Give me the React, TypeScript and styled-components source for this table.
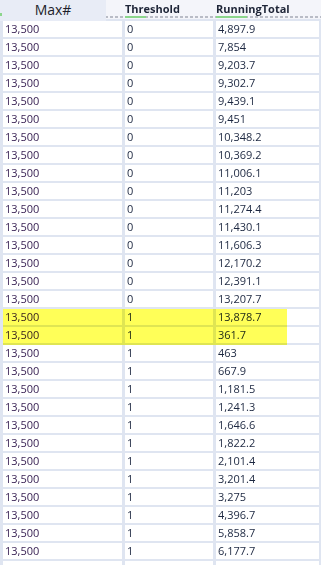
import styled, { createGlobalStyle } from "styled-components"

const GlobalStyle = createGlobalStyle`
  html, body {
    margin: 0;
    padding: 0;
    background: #ffffff;
  }
  body {
    font-family: "Open Sans", "Noto Sans", sans-serif;
  }
`

const zeros = [
  "4,897.9", "7,854", "9,203.7", "9,302.7", "9,439.1", "9,451", "10,348.2", "10,369.2",
  "11,006.1", "11,203", "11,274.4", "11,430.1", "11,606.3", "12,170.2", "12,391.1", "13,207.7",
]
const ones = [
  "13,878.7", "361.7", "463", "667.9", "1,181.5", "1,241.3", "1,646.6", "1,822.2",
  "2,101.4", "3,201.4", "3,275", "4,396.7", "5,858.7", "6,177.7", "",
]

const rows = [
  ...zeros.map(total => ({ max: "13,500", threshold: "0", total })),
  ...ones.map(total => ({ max: total ? "13,500" : "", threshold: total ? "1" : "", total })),
]

const ROW_PITCH = 18

const Page = styled.div`
  width: 321px;
  height: 565px;
  overflow: hidden;
  background: #dfe5f1;
`

const Header = styled.div`
  position: relative;
  height: 19px;
  background: #f4f5fa;
  display: grid;
  grid-template-columns: 122px 91px 108px;
  &::after {
    content: "";
    position: absolute;
    left: 0;
    right: 0;
    top: 16px;
    height: 2px;
    background: repeating-linear-gradient(90deg, #b9bcc6 0 3px, transparent 3px 5px);
  }
`

const MaxHeader = styled.div`
  position: relative;
  z-index: 1;
  width: 106px;
  height: 21px;
  background: #e8ecf6;
  color: #1d1d2a;
  font-size: 14px;
  line-height: 19px;
  text-align: center;
  &::before {
    content: "";
    position: absolute;
    left: 0;
    top: 13px;
    width: 2px;
    height: 3px;
    background: #8cd68c;
  }
`

const FieldHeader = styled.div<{ $mark: number }>`
  position: relative;
  padding-left: 3px;
  font-size: 11px;
  font-weight: 700;
  color: #1f2638;
  line-height: 17px;
  &::before {
    content: "";
    position: absolute;
    z-index: 1;
    left: 3px;
    top: 16px;
    width: ${p => p.$mark}px;
    height: 2px;
    background: #8cd68c;
  }
`

const Body = styled.div`
  position: relative;
  display: grid;
  grid-template-columns: 119px 88px 103px;
  column-gap: 3px;
  row-gap: 2px;
  padding: 2px 3px 0 3px;
`

const Cell = styled.div<{ $purple?: boolean }>`
  height: 16px;
  background: #ffffff;
  padding-left: 2px;
  font-size: 11px;
  line-height: 16px;
  color: ${p => (p.$purple ? "#3b2456" : "#1c2740")};
  white-space: nowrap;
`

const Highlight = styled.div`
  position: absolute;
  left: 3px;
  width: 284px;
  height: ${ROW_PITCH * 2}px;
  background: #ffff58;
  mix-blend-mode: multiply;
  pointer-events: none;
`

export default function App() {
  return (
    <Page>
      <GlobalStyle />
      <Header>
        <MaxHeader>Max#</MaxHeader>
        <FieldHeader $mark={21}>Threshold</FieldHeader>
        <FieldHeader $mark={31}>RunningTotal</FieldHeader>
      </Header>
      <Body>
        {rows.map((r, i) => [
          <Cell key={`a${i}`} $purple>{r.max}</Cell>,
          <Cell key={`b${i}`}>{r.threshold}</Cell>,
          <Cell key={`c${i}`}>{r.total}</Cell>,
        ])}
        <Highlight style={{ top: 2 + ROW_PITCH * zeros.length }} />
      </Body>
    </Page>
  )
}
